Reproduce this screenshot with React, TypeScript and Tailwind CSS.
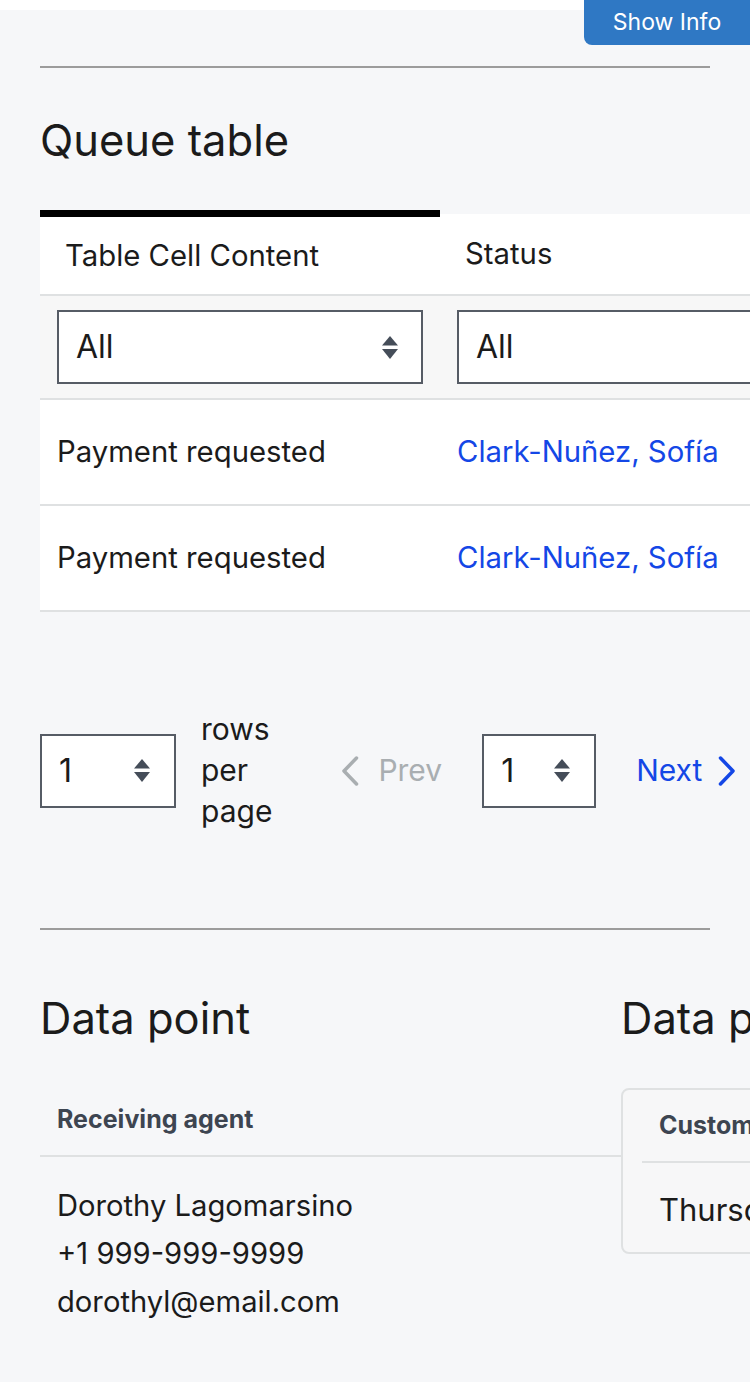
import React from 'react';

const SortArrows: React.FC<{ className?: string }> = ({ className }) => (
  <svg viewBox="0 0 16 23" className={className} fill="currentColor">
    <path d="M8 0 L16 9.5 H0 Z" />
    <path d="M0 13 H16 L8 23 Z" />
  </svg>
);

const Chevron: React.FC<{ dir: 'left' | 'right'; className?: string }> = ({ dir, className }) => (
  <svg
    viewBox="0 0 20 32"
    className={className}
    fill="none"
    stroke="currentColor"
    strokeWidth={3.5}
    strokeLinecap="round"
    strokeLinejoin="round"
  >
    <path d={dir === 'left' ? 'M16.5 3 L4 16 L16.5 29' : 'M3.5 3 L16 16 L3.5 29'} />
  </svg>
);

const SelectBox: React.FC<{ value: string; className?: string }> = ({ value, className }) => (
  <div
    className={`flex h-[74px] items-center justify-between border-2 border-[#565c65] bg-white text-[32px] text-[#1b1b1b] ${className ?? ''}`}
  >
    <span>{value}</span>
    <SortArrows className="h-[23px] w-[16px] text-[#454d59]" />
  </div>
);

const rows = [
  { content: 'Payment requested', status: 'Clark-Nuñez, Sofía' },
  { content: 'Payment requested', status: 'Clark-Nuñez, Sofía' },
];

export default function App() {
  return (
    <div className="relative min-h-[1382px] w-[750px] overflow-hidden bg-[#f6f7f9] font-['Inter',sans-serif] text-[#1b1b1b]">
      <div className="h-[10px] bg-white" />
      <button className="absolute right-0 top-0 h-[45px] w-[166px] rounded-bl-[8px] bg-[#2f78c4] text-[23px] text-white">
        Show Info
      </button>

      <div className="px-[40px]">
        <div className="mt-[56px] h-[2px] w-[670px] bg-[#9c9c9c]" />

        <h2 className="mt-[46px] text-[43.5px] leading-[52px]">Queue table</h2>

        {/* table */}
        <div className="mt-[44px] w-[1100px]">
          <div className="flex items-end border-b-2 border-[#dfe1e2]">
            <div className="flex h-[84px] w-[400px] items-center border-t-[7px] border-black bg-white px-[25px] text-[29.3px]">
              Table Cell Content
            </div>
            <div className="flex h-[80px] w-[400px] items-center bg-white px-[25px] text-[29.3px]">Status</div>
            <div className="h-[80px] flex-1 bg-white" />
          </div>

          <div className="flex h-[104px] items-center border-b-2 border-[#dfe1e2] bg-[#f7f7f7]">
            <div className="w-[400px] px-[17px]">
              <SelectBox value="All" className="pl-[17px] pr-[23px]" />
            </div>
            <div className="w-[400px] px-[17px]">
              <SelectBox value="All" className="pl-[17px] pr-[23px]" />
            </div>
          </div>

          {rows.map((r, i) => (
            <div key={i} className="flex h-[106px] items-center border-b-2 border-[#dfe1e2] bg-white text-[29.3px]">
              <div className="w-[400px] px-[17px]">{r.content}</div>
              <div className="w-[400px] px-[17px] text-blue-700">{r.status}</div>
            </div>
          ))}
        </div>

        {/* pagination */}
        <div className="mt-[97px] flex items-center text-[30px]">
          <SelectBox value="1" className="w-[136px] shrink-0 pl-[17px] pr-[24px]" />
          <div className="ml-[25px] w-[75px] leading-[41px]">rows per page</div>
          <div className="ml-[68px] flex items-center gap-[18px] text-[#a9aeb1]">
            <Chevron dir="left" className="h-[32px] w-[20px]" />
            <span>Prev</span>
          </div>
          <SelectBox value="1" className="ml-[40px] w-[114px] shrink-0 pl-[17px] pr-[24px]" />
          <div className="ml-[40px] flex items-center gap-[15px] text-blue-700">
            <span>Next</span>
            <Chevron dir="right" className="h-[32px] w-[20px]" />
          </div>
        </div>

        <div className="mt-[96px] h-[2px] w-[670px] bg-[#9c9c9c]" />

        {/* data points */}
        <div className="flex w-[1200px]">
          <div className="w-[581px] shrink-0">
            <h2 className="mt-[62px] text-[43.5px] leading-[52px]">Data point</h2>
            <div className="mt-[40px] flex h-[73px] items-center border-b-2 border-[#dfe1e2] px-[17px] text-[25px] font-bold text-[#3d4551]">
              Receiving agent
            </div>
            <div className="px-[17px] pt-[25px] text-[29.2px] leading-[48px]">
              <div>Dorothy Lagomarsino</div>
              <div>+1 999-999-9999</div>
              <div>dorothyl@email.com</div>
            </div>
          </div>

          <div className="w-[520px] shrink-0">
            <h2 className="mt-[62px] text-[43.5px] leading-[52px]">Data point</h2>
            <div className="mt-[44px] rounded-[8px] border-2 border-[#dfe1e2] bg-[#f7f7f8] px-[19px]">
              <div className="flex h-[73px] items-center border-b-2 border-[#dfe1e2] px-[17px] text-[25px] font-bold text-[#3d4551]">
                Customer since
              </div>
              <div className="px-[17px] pb-[18px] pt-[23px] text-[31px] leading-[48px]">Thursday, March 14</div>
            </div>
          </div>
        </div>
      </div>
    </div>
  );
}
